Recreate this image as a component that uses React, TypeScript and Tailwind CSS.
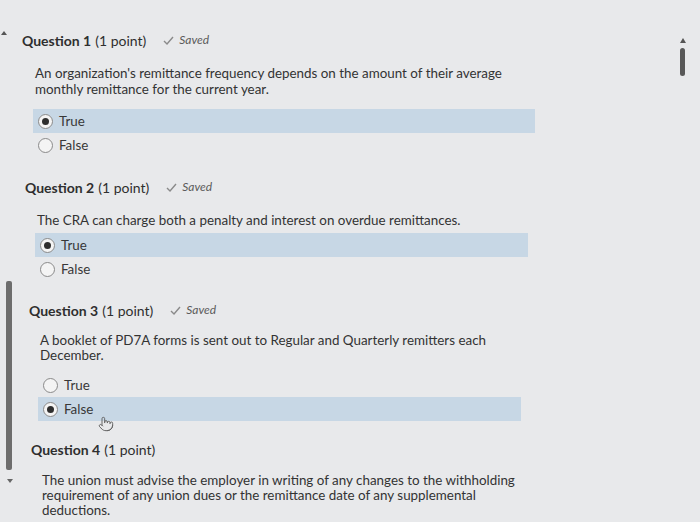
import { Pointer } from "lucide-react";

type Opt = { label: string; checked: boolean };

interface QuestionProps {
  num: number;
  saved?: boolean;
  lines: string[];
  options?: Opt[];
  wrap: string;
  body: string;
  opts: string;
}

function Radio({ checked }: { checked: boolean }) {
  return (
    <span className="w-[15px] h-[15px] rounded-full border border-[#8a8a8a] bg-[#f4f4f4] flex items-center justify-center shrink-0">
      {checked && <span className="w-[7px] h-[7px] rounded-full bg-[#2e2e2e]" />}
    </span>
  );
}

function Question({ num, saved, lines, options, wrap, body, opts }: QuestionProps) {
  return (
    <div className={wrap}>
      <div className="flex items-center h-[20px] text-[14px] text-[#2f2f2f]">
        <span className="font-bold">Question {num}</span>
        <span className="ml-[4px]">(1 point)</span>
        {saved && (
          <span className="flex items-center ml-[17px] text-[12px] italic text-[#5a5a5a]">
            <svg width="11" height="9" viewBox="0 0 11 9" className="mr-[5px]">
              <path d="M1 5 L4 8 L10 1" fill="none" stroke="#8a8a8a" strokeWidth="1.4" />
            </svg>
            Saved
          </span>
        )}
      </div>
      <div className={`text-[13.4px] text-[#333] ${body}`}>
        {lines.map((l) => (
          <div key={l}>{l}</div>
        ))}
      </div>
      {options && (
        <div className={opts}>
          {options.map((o) => (
            <div
              key={o.label}
              className={`flex items-center h-[24px] pl-[5px] gap-[6px] text-[13.4px] text-[#383838] ${o.checked ? "bg-[#c7d7e5]" : ""}`}
            >
              <Radio checked={o.checked} />
              <span>{o.label}</span>
            </div>
          ))}
        </div>
      )}
    </div>
  );
}

export default function App() {
  return (
    <div
      className="relative w-[700px] h-[522px] overflow-hidden bg-[#e8e9eb] pt-[30px]"
      style={{ fontFamily: "Lato, 'Open Sans', sans-serif" }}
    >
      {/* scroll markers */}
      <div className="absolute left-[1px] top-[31px] w-0 h-0 border-l-[3px] border-r-[3px] border-b-[4px] border-l-transparent border-r-transparent border-b-[#555]" />
      <div className="absolute left-[6px] top-[281px] w-[6px] h-[189px] rounded-[2px] bg-[#6d6d6d]" />
      <div className="absolute left-[7px] top-[479px] w-0 h-0 border-l-[3px] border-r-[3px] border-t-[4px] border-l-transparent border-r-transparent border-t-[#666]" />
      <div className="absolute left-[680px] top-[38px] w-0 h-0 border-l-[3px] border-r-[3px] border-b-[5px] border-l-transparent border-r-transparent border-b-[#555]" />
      <div className="absolute left-[680px] top-[48px] w-[5px] h-[28px] rounded-full bg-[#585858]" />

      <div className="flex flex-col">
        <Question
          num={1}
          saved
          wrap="ml-[22px]"
          body="mt-[15px] ml-[13px] leading-[16px]"
          opts="mt-[12px] ml-[11px] w-[502px]"
          lines={[
            "An organization's remittance frequency depends on the amount of their average",
            "monthly remittance for the current year.",
          ]}
          options={[
            { label: "True", checked: true },
            { label: "False", checked: false },
          ]}
        />
        <Question
          num={2}
          saved
          wrap="mt-[20px] ml-[25px]"
          body="mt-[15px] ml-[12px] leading-[16px]"
          opts="mt-[5px] ml-[10px] w-[493px]"
          lines={["The CRA can charge both a penalty and interest on overdue remittances."]}
          options={[
            { label: "True", checked: true },
            { label: "False", checked: false },
          ]}
        />
        <Question
          num={3}
          saved
          wrap="mt-[19px] ml-[29px]"
          body="mt-[13px] ml-[11px] leading-[15px]"
          opts="mt-[10px] ml-[9px] w-[483px]"
          lines={[
            "A booklet of PD7A forms is sent out to Regular and Quarterly remitters each",
            "December.",
          ]}
          options={[
            { label: "True", checked: false },
            { label: "False", checked: true },
          ]}
        />
        <Question
          num={4}
          wrap="mt-[18px] ml-[31px]"
          body="mt-[14px] ml-[11px] leading-[15px]"
          opts=""
          lines={[
            "The union must advise the employer in writing of any changes to the withholding",
            "requirement of any union dues or the remittance date of any supplemental",
            "deductions.",
          ]}
        />
      </div>

      <Pointer className="absolute left-[98px] top-[416px]" size={16} color="#666" strokeWidth={1.5} />
    </div>
  );
}
